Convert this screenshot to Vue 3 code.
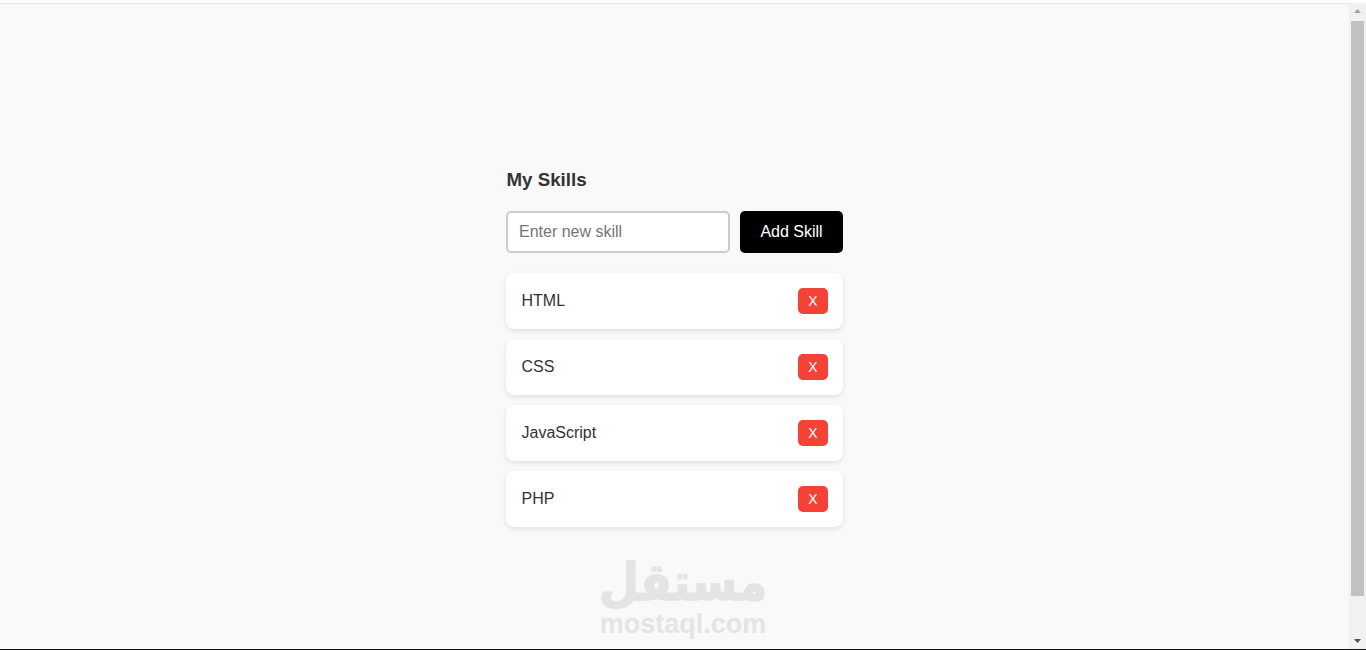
<script setup>
import { ref } from "vue";

const newSkill = ref("");
const skills = ref(["HTML", "CSS", "JavaScript", "PHP"]);

function addSkill() {
  const name = newSkill.value.trim();
  if (!name) return;
  skills.value.push(name);
  newSkill.value = "";
}

function removeSkill(index) {
  skills.value.splice(index, 1);
}
</script>

<template>
  <div class="window">
    <main class="page">
      <section class="skills">
        <h2 class="title">My Skills</h2>

        <form class="add-form" @submit.prevent="addSkill">
          <input v-model="newSkill" class="skill-input" type="text" placeholder="Enter new skill" />
          <button class="add-button" type="submit">Add Skill</button>
        </form>

        <ul class="skill-list">
          <li v-for="(skill, index) in skills" :key="skill" class="skill-item">
            <span>{{ skill }}</span>
            <button class="remove-button" type="button" @click="removeSkill(index)">X</button>
          </li>
        </ul>
      </section>

      <div class="watermark">
        <span class="watermark-ar" dir="rtl">مستقل</span>
        <span class="watermark-en">mostaql.com</span>
      </div>
    </main>

    <div class="scrollbar">
      <svg class="arrow" width="17" height="17" viewBox="0 0 17 17">
        <path d="M8.5 6 L12 10 H5 Z" fill="#a3a3a3" />
      </svg>
      <div class="track"><div class="thumb"></div></div>
      <svg class="arrow" width="17" height="17" viewBox="0 0 17 17">
        <path d="M5 7 H12 L8.5 11 Z" fill="#505050" />
      </svg>
    </div>
  </div>
</template>

<style>
html,
body {
  margin: 0;
  height: 100%;
  overflow: hidden;
}
</style>

<style scoped>
.window {
  display: flex;
  box-sizing: border-box;
  height: 650px;
  padding-top: 3px;
  background: #ffffff;
  border-bottom: 1px solid #111111;
  font-family: "Liberation Sans", Arial, sans-serif;
}

.page {
  position: relative;
  flex: 1;
  display: flex;
  justify-content: center;
  box-sizing: border-box;
  padding-top: 165px;
  background: #f9f9f9;
  border-top: 1px solid #e3e3e3;
  overflow: hidden;
}

.skills {
  width: 337px;
}

.title {
  margin: 0 0 21px;
  padding-left: 0.5px;
  color: #333333;
  font-size: 18.72px;
  line-height: 21px;
  font-weight: bold;
}

.add-form {
  display: flex;
  gap: 10px;
  margin-bottom: 20px;
}

.skill-input {
  flex: 1;
  min-width: 0;
  box-sizing: border-box;
  height: 42px;
  padding: 10px 11px;
  border: 2px solid #cccccc;
  border-radius: 5px;
  background: #ffffff;
  font-family: inherit;
  font-size: 16px;
  outline: none;
}

.skill-input::placeholder {
  color: #757575;
}

.add-button {
  width: 103px;
  height: 42px;
  padding: 0;
  border: 0;
  border-radius: 5px;
  background: #000000;
  color: #ffffff;
  font-family: inherit;
  font-size: 16px;
  cursor: pointer;
}

.skill-list {
  display: flex;
  flex-direction: column;
  gap: 10px;
  margin: 0;
  padding: 0;
  list-style: none;
}

.skill-item {
  display: flex;
  justify-content: space-between;
  align-items: center;
  height: 56px;
  box-sizing: border-box;
  padding: 0 15px 0 15.5px;
  border-radius: 8px;
  background: #ffffff;
  box-shadow: 0 2px 5px rgba(0, 0, 0, 0.1);
  color: #333333;
  font-size: 16px;
}

.remove-button {
  width: 30px;
  height: 26px;
  padding: 0;
  border: 0;
  border-radius: 5px;
  background: #f44336;
  color: #ffffff;
  font-family: inherit;
  font-size: 14px;
  cursor: pointer;
}

.watermark {
  position: absolute;
  left: 600px;
  top: 556px;
  width: 166px;
  display: flex;
  flex-direction: column;
  align-items: center;
  color: #e4e4e4;
  font-weight: bold;
  pointer-events: none;
}

.watermark-ar {
  height: 44px;
  font-family: "DejaVu Sans", sans-serif;
  font-size: 46px;
  line-height: 44px;
  white-space: nowrap;
  -webkit-text-stroke: 1.5px #e4e4e4;
  transform: scaleY(1.12);
}

.watermark-en {
  margin-top: 7px;
  font-family: "Liberation Sans", Arial, sans-serif;
  font-size: 27px;
  line-height: 27px;
  white-space: nowrap;
}

.scrollbar {
  display: flex;
  flex-direction: column;
  width: 17px;
  background: #f1f1f1;
}

.arrow {
  display: block;
  flex: none;
}

.track {
  flex: 1;
  padding: 1px 2px 0;
}

.thumb {
  height: 575px;
  background: #c1c1c1;
}
</style>
